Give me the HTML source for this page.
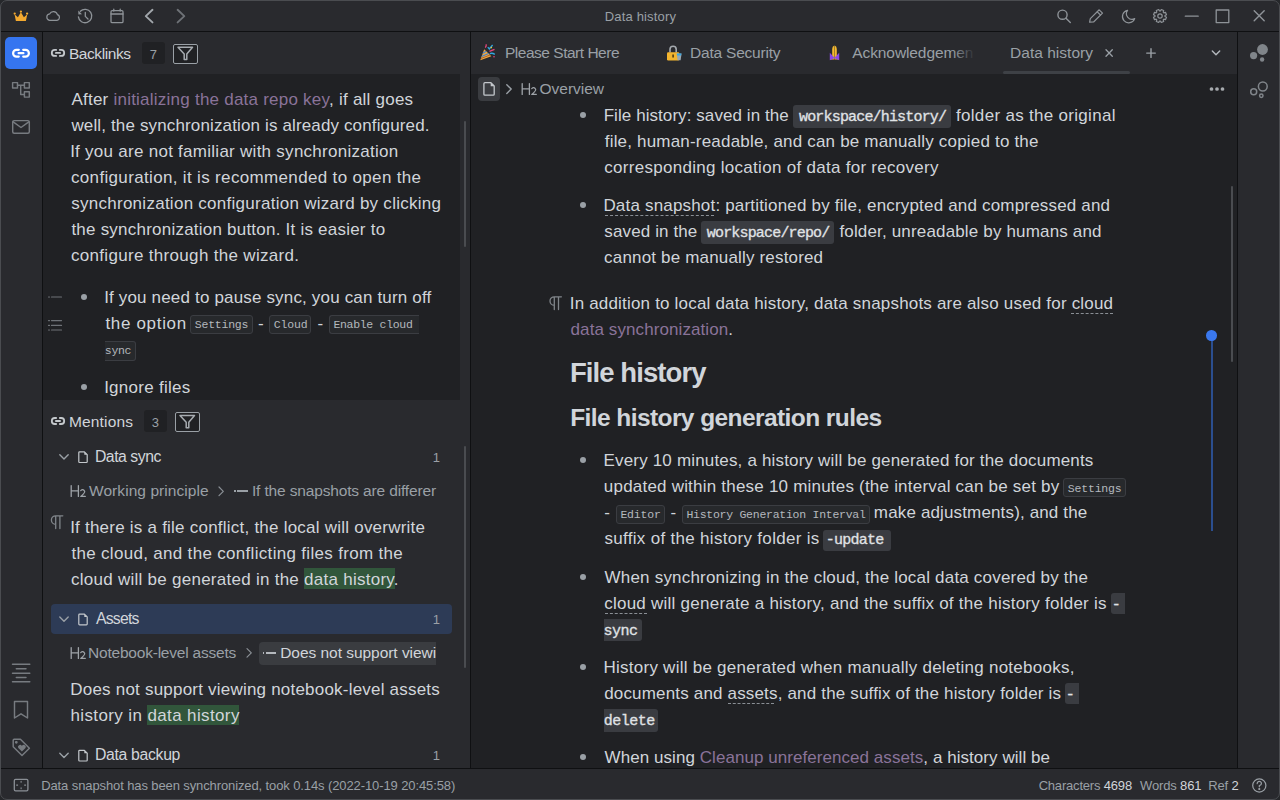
<!DOCTYPE html>
<html><head><meta charset="utf-8"><style>
html,body{margin:0;padding:0;}
body{width:1280px;height:800px;overflow:hidden;position:relative;background:#292a2e;font-family:"Liberation Sans",sans-serif;color:#d1d5da;}
.l{position:absolute;white-space:nowrap;}
.b{position:absolute;}
svg{position:absolute;overflow:visible;}

</style></head><body>
<div class="b" style="left:0.00px;top:31.00px;width:1280.00px;height:1.00px;background:#0f1012"></div>
<div class="b" style="left:42.00px;top:31.00px;width:1.00px;height:737.00px;background:#0f1012"></div>
<div class="b" style="left:43.00px;top:74.00px;width:417.00px;height:326.00px;background:#202124"></div>
<div class="b" style="left:464.00px;top:121.00px;width:2.00px;height:126.00px;background:#4a4c50;border-radius:1px"></div>
<div class="b" style="left:464.00px;top:446.00px;width:2.00px;height:222.00px;background:#4a4c50;border-radius:1px"></div>
<div class="b" style="left:470.00px;top:31.00px;width:1.00px;height:737.00px;background:#0f1012"></div>
<div class="b" style="left:471.00px;top:74.00px;width:766.00px;height:694.00px;background:#202124"></div>
<div class="b" style="left:1237.00px;top:31.00px;width:1.00px;height:737.00px;background:#0f1012"></div>
<div class="b" style="left:0.00px;top:768.00px;width:1280.00px;height:1.00px;background:#0f1012"></div>
<div class="b" style="left:1231.00px;top:186.00px;width:2.00px;height:176.00px;background:#4a4c50;border-radius:1px"></div>
<div class="b" style="left:1210.50px;top:336.00px;width:2.00px;height:195.00px;background:#2b4e8f"></div>
<div class="b" style="left:1206.30px;top:330.30px;width:10.60px;height:10.60px;background:#3a78ee;border-radius:50%"></div>
<div class="l" id="t1" style="letter-spacing:0.157px;left:604.83px;top:9.00px;font-size:13px;line-height:15px;color:#9aa0a6;">Data history</div>
<div class="b" style="left:5.00px;top:37.00px;width:32.00px;height:32.00px;background:#3575f0;border-radius:5px"></div>
<div class="l" id="t2" style="letter-spacing:-0.421px;left:68.93px;top:45.00px;font-size:15.5px;line-height:17px;color:#d1d5da;">Backlinks</div>
<div class="b" style="left:142.00px;top:42.00px;width:23.00px;height:21.60px;background:#202124;border-radius:3px"></div>
<div class="l" id="t3" style="left:149.63px;top:47.00px;font-size:13px;line-height:15px;color:#9aa0a6;">7</div>
<div class="b" style="left:173.00px;top:43.70px;width:25.00px;height:20.30px;border:1px solid #9aa0a6;box-sizing:border-box;border-radius:2px;background:#202124"></div>
<div class="l" id="t4" style="letter-spacing:0.235px;left:71.40px;top:90.00px;font-size:17px;line-height:19px;">After <span style="color:#8a7399">initializing the data repo key</span>, if all goes</div>
<div class="l" id="t5" style="letter-spacing:0.140px;left:71.40px;top:116.00px;font-size:17px;line-height:19px;">well, the synchronization is already configured.</div>
<div class="l" id="t6" style="letter-spacing:0.269px;left:70.13px;top:142.00px;font-size:17px;line-height:19px;">If you are not familiar with synchronization</div>
<div class="l" id="t7" style="letter-spacing:0.340px;left:70.98px;top:168.00px;font-size:17px;line-height:19px;">configuration, it is recommended to open the</div>
<div class="l" id="t8" style="letter-spacing:0.268px;left:71.23px;top:194.00px;font-size:17px;line-height:19px;">synchronization configuration wizard by clicking</div>
<div class="l" id="t9" style="letter-spacing:0.224px;left:71.40px;top:220.00px;font-size:17px;line-height:19px;">the synchronization button. It is easier to</div>
<div class="l" id="t10" style="letter-spacing:0.316px;left:70.98px;top:246.00px;font-size:17px;line-height:19px;">configure through the wizard.</div>
<div class="b" style="left:80.90px;top:294.00px;width:6.00px;height:6.00px;background:#9aa0a6;border-radius:50%"></div>
<div class="l" id="t11" style="letter-spacing:0.168px;left:104.13px;top:288.00px;font-size:17px;line-height:19px;">If you need to pause sync, you can turn off</div>
<div class="l" id="t12" style="letter-spacing:0.679px;left:105.40px;top:314.00px;font-size:17px;line-height:19px;">the option</div>
<div class="b" style="left:190.40px;top:315.40px;width:62.40px;height:19.10px;background:#27292c;border:1px solid #3b3d42;box-sizing:border-box;border-radius:3px"></div>
<div class="l" id="t13" style="letter-spacing:-0.246px;left:194.86px;top:318.00px;font-size:11.5px;line-height:13px;font-family:'Liberation Mono',monospace;color:#b4b8bd;">Settings</div>
<div class="l" id="t14" style="left:258.04px;top:314.00px;font-size:17px;line-height:19px;">-</div>
<div class="b" style="left:269.30px;top:315.40px;width:41.70px;height:19.10px;background:#27292c;border:1px solid #3b3d42;box-sizing:border-box;border-radius:3px"></div>
<div class="l" id="t15" style="letter-spacing:-0.129px;left:273.67px;top:318.00px;font-size:11.5px;line-height:13px;font-family:'Liberation Mono',monospace;color:#b4b8bd;">Cloud</div>
<div class="l" id="t16" style="left:317.54px;top:314.00px;font-size:17px;line-height:19px;">-</div>
<div class="b" style="left:329.00px;top:315.40px;width:89.80px;height:19.10px;background:#27292c;border:1px solid #3b3d42;border-right:none;box-sizing:border-box;border-radius:3px 0 0 3px"></div>
<div class="l" id="t17" style="letter-spacing:-0.303px;left:333.39px;top:318.00px;font-size:11.5px;line-height:13px;font-family:'Liberation Mono',monospace;color:#b4b8bd;">Enable cloud</div>
<div class="b" style="left:105.00px;top:341.00px;width:30.70px;height:19.70px;background:#27292c;border:1px solid #3b3d42;border-left:none;box-sizing:border-box;border-radius:0 3px 3px 0"></div>
<div class="l" id="t18" style="letter-spacing:-0.370px;left:104.86px;top:344.00px;font-size:11.5px;line-height:13px;font-family:'Liberation Mono',monospace;color:#b4b8bd;">sync</div>
<div class="b" style="left:80.90px;top:384.00px;width:6.00px;height:6.00px;background:#9aa0a6;border-radius:50%"></div>
<div class="l" id="t19" style="letter-spacing:0.266px;left:104.13px;top:378.00px;font-size:17px;line-height:19px;">Ignore files</div>
<div class="l" id="t20" style="letter-spacing:0.171px;left:68.93px;top:413.00px;font-size:15.5px;line-height:17px;color:#d1d5da;">Mentions</div>
<div class="b" style="left:144.00px;top:410.00px;width:23.00px;height:21.50px;background:#202124;border-radius:3px"></div>
<div class="l" id="t21" style="left:151.80px;top:415.00px;font-size:13px;line-height:15px;color:#9aa0a6;">3</div>
<div class="b" style="left:175.00px;top:412.00px;width:25.00px;height:20.30px;border:1px solid #9aa0a6;box-sizing:border-box;border-radius:2px;background:#202124"></div>
<div class="l" id="t22" style="letter-spacing:-0.469px;left:94.90px;top:448.00px;font-size:15.8px;line-height:17px;color:#d1d5da;">Data sync</div>
<div class="l" id="t23" style="left:432.81px;top:450.00px;font-size:13px;line-height:15px;color:#9aa0a6;">1</div>
<div class="l" id="t24" style="letter-spacing:0.068px;left:89.00px;top:482.00px;font-size:15.5px;line-height:17px;color:#9aa0a6;">Working principle</div>
<div class="l" id="t25" style="letter-spacing:-0.154px;left:251.97px;top:482.00px;font-size:15.5px;line-height:17px;color:#9aa0a6;">If the snapshots are differer</div>
<div class="b" style="left:234.10px;top:490.00px;width:1.70px;height:2.00px;background:#9aa0a6"></div>
<div class="b" style="left:237.10px;top:490.00px;width:10.70px;height:2.00px;background:#9aa0a6"></div>
<div class="l" id="t26" style="letter-spacing:0.229px;left:70.13px;top:518.00px;font-size:17px;line-height:19px;">If there is a file conflict, the local will overwrite</div>
<div class="l" id="t27" style="letter-spacing:0.313px;left:71.40px;top:544.00px;font-size:17px;line-height:19px;">the cloud, and the conflicting files from the</div>
<div class="b" style="left:303.70px;top:568.00px;width:91.10px;height:21.00px;background:#31563b"></div>
<div class="l" id="t28" style="letter-spacing:0.263px;left:70.98px;top:570.00px;font-size:17px;line-height:19px;">cloud will be generated in the data history.</div>
<div class="b" style="left:51.00px;top:604.00px;width:400.80px;height:29.60px;background:#2d3b56;border-radius:4px"></div>
<div class="l" id="t29" style="letter-spacing:-0.781px;left:95.90px;top:610.00px;font-size:15.8px;line-height:17px;color:#d1d5da;">Assets</div>
<div class="l" id="t30" style="left:432.81px;top:612.00px;font-size:13px;line-height:15px;color:#9aa0a6;">1</div>
<div class="l" id="t31" style="letter-spacing:-0.210px;left:88.03px;top:644.00px;font-size:15.5px;line-height:17px;color:#9aa0a6;">Notebook-level assets</div>
<div class="b" style="left:258.70px;top:642.00px;width:177.00px;height:23.00px;background:#3a3c40;border-radius:4px 0 0 4px"></div>
<div class="l" id="t32" style="letter-spacing:-0.039px;left:280.23px;top:644.00px;font-size:15.5px;line-height:17px;color:#d1d5da;">Does not support viewi</div>
<div class="b" style="left:262.60px;top:652.00px;width:1.70px;height:2.00px;background:#b4b8bd"></div>
<div class="b" style="left:265.60px;top:652.00px;width:10.70px;height:2.00px;background:#b4b8bd"></div>
<div class="l" id="t33" style="letter-spacing:0.210px;left:70.31px;top:680.00px;font-size:17px;line-height:19px;">Does not support viewing notebook-level assets</div>
<div class="b" style="left:147.00px;top:704.50px;width:91.80px;height:20.80px;background:#31563b"></div>
<div class="l" id="t34" style="letter-spacing:0.375px;left:70.52px;top:706.00px;font-size:17px;line-height:19px;">history in data history</div>
<div class="l" id="t35" style="letter-spacing:-0.320px;left:94.90px;top:746.00px;font-size:15.8px;line-height:17px;color:#d1d5da;">Data backup</div>
<div class="l" id="t36" style="left:432.81px;top:748.00px;font-size:13px;line-height:15px;color:#9aa0a6;">1</div>
<div class="l" id="t37" style="letter-spacing:-0.490px;left:505.03px;top:44.00px;font-size:15.5px;line-height:17px;color:#9aa0a6;">Please Start Here</div>
<div class="l" id="t38" style="letter-spacing:-0.212px;left:690.03px;top:44.00px;font-size:15.5px;line-height:17px;color:#9aa0a6;">Data Security</div>
<div class="l" id="t39" style="letter-spacing:-0.097px;left:852.30px;top:44.00px;font-size:15.5px;line-height:17px;color:#9aa0a6;">Acknowledgemen</div>
<div class="l" id="t40" style="letter-spacing:0.027px;left:1010.03px;top:44.00px;font-size:15.5px;line-height:17px;color:#9aa0a6;">Data history</div>
<div class="b" style="left:1003.30px;top:71.00px;width:126.30px;height:3.00px;background:#3e4146;border-radius:2px"></div>
<div class="b" style="left:478.00px;top:77.00px;width:22.00px;height:24.00px;background:#3a3c40;border-radius:4px"></div>
<div class="l" id="t41" style="letter-spacing:-0.016px;left:539.57px;top:80.00px;font-size:15.5px;line-height:17px;color:#9aa0a6;">Overview</div>
<div class="b" style="left:580.00px;top:112.00px;width:6.00px;height:6.00px;background:#9aa0a6;border-radius:50%"></div>
<div class="l" id="t42" style="letter-spacing:0.071px;left:603.66px;top:106.00px;font-size:17px;line-height:19px;">File history: saved in the</div>
<div class="b" style="left:793.00px;top:105.30px;width:157.75px;height:22.50px;background:#3a3c41;border-radius:3px"></div>
<div class="l" id="t43" style="letter-spacing:-0.825px;left:799.00px;top:109.00px;font-size:15px;line-height:17px;font-family:'Liberation Mono',monospace;-webkit-text-stroke:0.3px currentColor;color:#e0e3e6;">workspace/history/</div>
<div class="l" id="t44" style="letter-spacing:0.305px;left:956.00px;top:106.00px;font-size:17px;line-height:19px;">folder as the original</div>
<div class="l" id="t45" style="letter-spacing:0.191px;left:604.75px;top:132.00px;font-size:17px;line-height:19px;">file, human-readable, and can be manually copied to the</div>
<div class="l" id="t46" style="letter-spacing:0.285px;left:604.33px;top:158.00px;font-size:17px;line-height:19px;">corresponding location of data for recovery</div>
<div class="b" style="left:580.00px;top:202.00px;width:6.00px;height:6.00px;background:#9aa0a6;border-radius:50%"></div>
<div class="l" id="t47" style="letter-spacing:0.182px;left:603.41px;top:196.00px;font-size:17px;line-height:19px;">Data snapshot: partitioned by file, encrypted and compressed and</div>
<div class="b" style="left:604.50px;top:215.00px;width:109.00px;height:1.00px;border-top:1px dashed #8a8f95"></div>
<div class="l" id="t48" style="letter-spacing:0.119px;left:604.33px;top:222.00px;font-size:17px;line-height:19px;">saved in the</div>
<div class="b" style="left:701.20px;top:221.30px;width:132.60px;height:22.50px;background:#3a3c41;border-radius:3px"></div>
<div class="l" id="t49" style="letter-spacing:-0.824px;left:706.80px;top:225.00px;font-size:15px;line-height:17px;font-family:'Liberation Mono',monospace;-webkit-text-stroke:0.3px currentColor;color:#e0e3e6;">workspace/repo/</div>
<div class="l" id="t50" style="letter-spacing:0.162px;left:839.40px;top:222.00px;font-size:17px;line-height:19px;">folder, unreadable by humans and</div>
<div class="l" id="t51" style="letter-spacing:0.172px;left:604.08px;top:248.00px;font-size:17px;line-height:19px;">cannot be manually restored</div>
<div class="l" id="t52" style="letter-spacing:0.187px;left:569.73px;top:294.00px;font-size:17px;line-height:19px;">In addition to local data history, data snapshots are also used for cloud</div>
<div class="b" style="left:1071.00px;top:313.00px;width:41.80px;height:1.00px;border-top:1px dashed #8a8f95"></div>
<div class="l" id="t53" style="letter-spacing:0.091px;left:570.59px;top:320.00px;font-size:17px;line-height:19px;"><span style="color:#8a7399">data synchronization</span>.</div>
<div class="l" id="t54" style="letter-spacing:-0.928px;left:569.96px;top:357.00px;font-size:27.5px;line-height:31px;font-weight:700;color:#d1d5da;">File history</div>
<div class="l" id="t55" style="letter-spacing:-0.579px;left:570.16px;top:404.00px;font-size:24.5px;line-height:27px;font-weight:700;color:#d1d5da;">File history generation rules</div>
<div class="b" style="left:580.00px;top:457.00px;width:6.00px;height:6.00px;background:#9aa0a6;border-radius:50%"></div>
<div class="l" id="t56" style="letter-spacing:0.174px;left:603.51px;top:451.00px;font-size:17px;line-height:19px;">Every 10 minutes, a history will be generated for the documents</div>
<div class="l" id="t57" style="letter-spacing:0.210px;left:603.80px;top:477.00px;font-size:17px;line-height:19px;">updated within these 10 minutes (the interval can be set by</div>
<div class="b" style="left:1063.40px;top:478.40px;width:62.30px;height:19.00px;background:#27292c;border:1px solid #3b3d42;box-sizing:border-box;border-radius:3px"></div>
<div class="l" id="t58" style="letter-spacing:-0.203px;left:1067.86px;top:482.00px;font-size:11.5px;line-height:13px;font-family:'Liberation Mono',monospace;color:#b4b8bd;">Settings</div>
<div class="l" id="t59" style="left:604.14px;top:503.00px;font-size:17px;line-height:19px;">-</div>
<div class="b" style="left:616.30px;top:504.50px;width:48.70px;height:19.20px;background:#27292c;border:1px solid #3b3d42;box-sizing:border-box;border-radius:3px"></div>
<div class="l" id="t60" style="letter-spacing:-0.184px;left:620.39px;top:508.00px;font-size:11.5px;line-height:13px;font-family:'Liberation Mono',monospace;color:#b4b8bd;">Editor</div>
<div class="l" id="t61" style="left:670.54px;top:503.00px;font-size:17px;line-height:19px;">-</div>
<div class="b" style="left:682.00px;top:504.50px;width:187.70px;height:19.20px;background:#27292c;border:1px solid #3b3d42;box-sizing:border-box;border-radius:3px"></div>
<div class="l" id="t62" style="letter-spacing:-0.263px;left:686.39px;top:508.00px;font-size:11.5px;line-height:13px;font-family:'Liberation Mono',monospace;color:#b4b8bd;">History Generation Interval</div>
<div class="l" id="t63" style="letter-spacing:0.145px;left:873.87px;top:503.00px;font-size:17px;line-height:19px;">make adjustments), and the</div>
<div class="l" id="t64" style="letter-spacing:0.308px;left:604.43px;top:529.00px;font-size:17px;line-height:19px;">suffix of the history folder is</div>
<div class="b" style="left:823.00px;top:529.50px;width:67.70px;height:21.30px;background:#3a3c41;border-radius:3px"></div>
<div class="l" id="t65" style="letter-spacing:-0.753px;left:825.85px;top:532.00px;font-size:15px;line-height:17px;font-family:'Liberation Mono',monospace;-webkit-text-stroke:0.3px currentColor;color:#e0e3e6;">-update</div>
<div class="b" style="left:580.00px;top:574.00px;width:6.00px;height:6.00px;background:#9aa0a6;border-radius:50%"></div>
<div class="l" id="t66" style="letter-spacing:0.192px;left:604.60px;top:568.00px;font-size:17px;line-height:19px;">When synchronizing in the cloud, the local data covered by the</div>
<div class="l" id="t67" style="letter-spacing:0.250px;left:604.18px;top:594.00px;font-size:17px;line-height:19px;">cloud will generate a history, and the suffix of the history folder is</div>
<div class="b" style="left:604.60px;top:613.00px;width:42.40px;height:1.00px;border-top:1px dashed #8a8f95"></div>
<div class="b" style="left:1111.00px;top:593.40px;width:13.70px;height:21.00px;background:#3a3c41;border-radius:3px 0 0 3px"></div>
<div class="l" id="t68" style="left:1111.85px;top:597.00px;font-size:15px;line-height:17px;font-family:'Liberation Mono',monospace;-webkit-text-stroke:0.3px currentColor;color:#e0e3e6;">-</div>
<div class="b" style="left:603.80px;top:619.30px;width:38.00px;height:21.70px;background:#3a3c41;border-radius:0 3px 3px 0"></div>
<div class="l" id="t69" style="letter-spacing:-0.505px;left:603.58px;top:623.00px;font-size:15px;line-height:17px;font-family:'Liberation Mono',monospace;-webkit-text-stroke:0.3px currentColor;color:#e0e3e6;">sync</div>
<div class="b" style="left:580.00px;top:664.00px;width:6.00px;height:6.00px;background:#9aa0a6;border-radius:50%"></div>
<div class="l" id="t70" style="letter-spacing:0.249px;left:603.51px;top:658.00px;font-size:17px;line-height:19px;">History will be generated when manually deleting notebooks,</div>
<div class="l" id="t71" style="letter-spacing:0.170px;left:604.19px;top:684.00px;font-size:17px;line-height:19px;">documents and assets, and the suffix of the history folder is</div>
<div class="b" style="left:728.00px;top:703.40px;width:45.80px;height:1.00px;border-top:1px dashed #8a8f95"></div>
<div class="b" style="left:1065.00px;top:683.00px;width:13.60px;height:21.00px;background:#3a3c41;border-radius:3px 0 0 3px"></div>
<div class="l" id="t72" style="left:1065.85px;top:687.00px;font-size:15px;line-height:17px;font-family:'Liberation Mono',monospace;-webkit-text-stroke:0.3px currentColor;color:#e0e3e6;">-</div>
<div class="b" style="left:603.75px;top:708.75px;width:54.05px;height:23.45px;background:#3a3c41;border-radius:0 3px 3px 0"></div>
<div class="l" id="t73" style="letter-spacing:-0.503px;left:603.79px;top:713.00px;font-size:15px;line-height:17px;font-family:'Liberation Mono',monospace;-webkit-text-stroke:0.3px currentColor;color:#e0e3e6;">delete</div>
<div class="b" style="left:580.00px;top:754.00px;width:6.00px;height:6.00px;background:#9aa0a6;border-radius:50%"></div>
<div class="l" id="t74" style="letter-spacing:0.056px;left:604.60px;top:748.00px;font-size:17px;line-height:19px;">When using <span style="color:#8a7399">Cleanup unreferenced assets</span>, a history will be</div>
<div class="l" id="t75" style="letter-spacing:-0.108px;left:41.23px;top:778.00px;font-size:13px;line-height:15px;color:#9aa0a6;">Data snapshot has been synchronized, took 0.14s (2022-10-19 20:45:58)</div>
<div class="l" id="t76" style="letter-spacing:-0.188px;left:1038.64px;top:778.00px;font-size:13px;line-height:15px;color:#9aa0a6;">Characters <span style="color:#d1d5da">4698</span></div>
<div class="l" id="t77" style="letter-spacing:-0.143px;left:1140.00px;top:778.00px;font-size:13px;line-height:15px;color:#9aa0a6;">Words <span style="color:#d1d5da">861</span></div>
<div class="l" id="t78" style="letter-spacing:-0.145px;left:1208.23px;top:778.00px;font-size:13px;line-height:15px;color:#9aa0a6;">Ref <span style="color:#d1d5da">2</span></div>
<svg width="1280" height="800" style="left:0;top:0" fill="#f3a92f"><path d="M15.9 21 L14.5 14.3 L17.9 17.2 L20.9 12.3 L23.9 17.2 L27.3 14.3 L25.9 21 Z"/><circle cx="14.7" cy="13.6" r="1.15"/><circle cx="20.9" cy="11.6" r="1.15"/><circle cx="27.1" cy="13.6" r="1.15"/></svg>
<svg width="1280" height="800" style="left:0;top:0" fill="none" stroke="#8e9398" stroke-width="1.2" stroke-linecap="round" stroke-linejoin="round"><path d="M49.5 20.4 H57 A3 3 0 0 0 57.4 14.6 A4.2 4.2 0 0 0 49.6 13.9 A3.3 3.3 0 0 0 49.5 20.4 Z"/></svg>
<svg width="1280" height="800" style="left:0;top:0" fill="none" stroke="#8e9398" stroke-width="1.3" stroke-linecap="round" stroke-linejoin="round"><path d="M80.3 11.3 A6.7 6.7 0 1 1 78.4 16.8"/><path d="M85.3 12.4 V16.4 L88 19"/><path d="M78.2 10.6 L78.4 14.4 L82 14.2 Z" fill="#8e9398" stroke="none"/></svg>
<svg width="1280" height="800" style="left:0;top:0" fill="none" stroke="#8e9398" stroke-width="1.3" stroke-linecap="round" stroke-linejoin="round"><rect x="111" y="10.6" width="12" height="12" rx="1.2"/><path d="M111 14 H123"/><path d="M113.8 9.2 V11 M120.2 9.2 V11"/></svg>
<svg width="1280" height="800" style="left:0;top:0" fill="none" stroke="#a2a7ac" stroke-width="1.9" stroke-linecap="round" stroke-linejoin="round"><path d="M152.5 9.8 L145.8 16.1 L152.5 22.4"/></svg>
<svg width="1280" height="800" style="left:0;top:0" fill="none" stroke="#6e7277" stroke-width="1.9" stroke-linecap="round" stroke-linejoin="round"><path d="M177.6 9.8 L184.3 16.1 L177.6 22.4"/></svg>
<svg width="1280" height="800" style="left:0;top:0" fill="none" stroke="#8e9398" stroke-width="1.4" stroke-linecap="round" stroke-linejoin="round"><circle cx="1062.5" cy="14.7" r="4.6"/><path d="M1066 18.3 L1070.3 22.4"/></svg>
<svg width="1280" height="800" style="left:0;top:0" fill="none" stroke="#8e9398" stroke-width="1.2" stroke-linecap="round" stroke-linejoin="round"><path d="M1089.6 22.2 L1090.3 18.6 L1099.2 9.8 L1102.5 13.1 L1093.6 22 Z"/><path d="M1097.3 11.8 L1100.5 15"/></svg>
<svg width="1280" height="800" style="left:0;top:0" fill="none" stroke="#8e9398" stroke-width="1.2" stroke-linecap="round" stroke-linejoin="round"><path d="M1127.6 10.3 A6.3 6.3 0 1 0 1134.7 18.6 A5.6 5.6 0 0 1 1127.6 10.3 Z"/></svg>
<svg width="1280" height="800" style="left:0;top:0" fill="none" stroke="#8e9398" stroke-width="1.2" stroke-linecap="round" stroke-linejoin="round"><path d="M1166.48 17.26 L1165.47 19.69 L1163.85 19.19 L1163.19 19.85 L1163.69 21.47 L1161.26 22.48 L1160.46 20.98 L1159.54 20.98 L1158.74 22.48 L1156.31 21.47 L1156.81 19.85 L1156.15 19.19 L1154.53 19.69 L1153.52 17.26 L1155.02 16.46 L1155.02 15.54 L1153.52 14.74 L1154.53 12.31 L1156.15 12.81 L1156.81 12.15 L1156.31 10.53 L1158.74 9.52 L1159.54 11.02 L1160.46 11.02 L1161.26 9.52 L1163.69 10.53 L1163.19 12.15 L1163.85 12.81 L1165.47 12.31 L1166.48 14.74 L1164.98 15.54 L1164.98 16.46 Z"/><circle cx="1160" cy="16" r="2.2"/></svg>
<svg width="1280" height="800" style="left:0;top:0" fill="none" stroke="#8e9398" stroke-width="1.3" stroke-linecap="round" stroke-linejoin="round"><path d="M1185.3 16.2 H1198.2"/></svg>
<svg width="1280" height="800" style="left:0;top:0" fill="none" stroke="#8e9398" stroke-width="1.3" stroke-linecap="round" stroke-linejoin="round"><rect x="1216.2" y="10" width="12.6" height="12.6"/></svg>
<svg width="1280" height="800" style="left:0;top:0" fill="none" stroke="#8e9398" stroke-width="1.4" stroke-linecap="round" stroke-linejoin="round"><path d="M1254.2 10.8 L1264.2 20.8 M1264.2 10.8 L1254.2 20.8"/></svg>
<svg width="1280" height="800" style="left:0;top:0" fill="none" stroke="#ffffff" stroke-width="2.2" stroke-linecap="round" stroke-linejoin="round"><path d="M18.80 49.80 H16.50 A3.40 3.40 0 0 0 16.50 56.60 H18.80"/><path d="M23.20 49.80 H25.50 A3.40 3.40 0 0 1 25.50 56.60 H23.20"/><path d="M18.60 53.20 H23.40"/></svg>
<svg width="1280" height="800" style="left:0;top:0" fill="none" stroke="#777b80" stroke-width="1.45" stroke-linecap="round" stroke-linejoin="round"><rect x="12.6" y="82.6" width="4.9" height="5.3"/><rect x="24.4" y="82.6" width="4.9" height="5.3"/><rect x="24.4" y="91.8" width="4.9" height="5.3"/><path d="M17.5 85.3 H24.4 M20.7 85.3 V94.5 H24.4"/></svg>
<svg width="1280" height="800" style="left:0;top:0" fill="none" stroke="#777b80" stroke-width="1.45" stroke-linecap="round" stroke-linejoin="round"><rect x="12.7" y="120.6" width="16.6" height="12.6" rx="1.5"/><path d="M13.2 121.8 L21 127.5 L28.8 121.8"/></svg>
<svg width="1280" height="800" style="left:0;top:0" fill="none" stroke="#777b80" stroke-width="1.45" stroke-linecap="round" stroke-linejoin="round"><path d="M12.5 664.3 H29.8 M16.3 668.8 H26 M12.5 673.2 H29.8 M16.3 677.5 H26 M12.5 681.8 H29.8"/></svg>
<svg width="1280" height="800" style="left:0;top:0" fill="none" stroke="#777b80" stroke-width="1.45" stroke-linecap="round" stroke-linejoin="round"><path d="M14.5 701.5 H27.5 V718 L21 713.8 L14.5 718 Z"/></svg>
<svg width="1280" height="800" style="left:0;top:0" fill="none" stroke="#777b80" stroke-width="1.45" stroke-linecap="round" stroke-linejoin="round"><path d="M13.2 740.2 Q13.2 739.2 14.2 739.2 H20.4 L29.4 748.2 L22 755.6 L13.2 746.8 Z"/><circle cx="16.3" cy="742.3" r="0.7" fill="#777b80"/><path d="M21.9 751.6 L18.3 748.1 A1.85 1.85 0 0 1 21.9 745.9 A1.85 1.85 0 0 1 25.5 748.1 Z" fill="#777b80" stroke="none"/></svg>
<svg width="1280" height="800" style="left:0;top:0" fill="none" stroke="#c4c8cc" stroke-width="1.8" stroke-linecap="round" stroke-linejoin="round"><path d="M56.15 49.92 H54.77 A2.98 2.98 0 0 0 54.77 55.88 H56.15"/><path d="M59.85 49.92 H61.23 A2.98 2.98 0 0 1 61.23 55.88 H59.85"/><path d="M55.90 52.90 H60.10"/></svg>
<svg width="1280" height="800" style="left:0;top:0" fill="none" stroke="#a6abb0" stroke-width="1.5" stroke-linecap="round" stroke-linejoin="round"><path d="M178.0 47.3 H192.5 L186.8 53.9 V59.5 H184.2 V53.9 Z"/></svg>
<svg width="1280" height="800" style="left:0;top:0" fill="none" stroke="#c4c8cc" stroke-width="1.8" stroke-linecap="round" stroke-linejoin="round"><path d="M56.15 418.02 H54.77 A2.98 2.98 0 0 0 54.77 423.98 H56.15"/><path d="M59.85 418.02 H61.23 A2.98 2.98 0 0 1 61.23 423.98 H59.85"/><path d="M55.90 421.00 H60.10"/></svg>
<svg width="1280" height="800" style="left:0;top:0" fill="none" stroke="#a6abb0" stroke-width="1.5" stroke-linecap="round" stroke-linejoin="round"><path d="M180.0 415.6 H194.5 L188.8 422.2 V427.8 H186.2 V422.2 Z"/></svg>
<svg width="1280" height="800" style="left:0;top:0" fill="none" stroke="#9aa0a6" stroke-width="1.4" stroke-linecap="round" stroke-linejoin="round"><path d="M59.8 454.7 L64 458.9 L68.2 454.7"/></svg>
<svg width="1280" height="800" style="left:0;top:0" fill="none" stroke="#c4c8cc" stroke-width="1.2" stroke-linecap="round" stroke-linejoin="round"><path d="M79.6 451.80 H84.4 L87.2 454.60 V461.70 Q87.2 462.50 86.4 462.50 H79.6 Q78.8 462.50 78.8 461.70 V452.60 Q78.8 451.80 79.6 451.80 Z"/></svg>
<svg width="1280" height="800" style="left:0;top:0" fill="#c4c8cc"><path d="M84.3 451.80 L87.3 454.80 H84.3 Z"/></svg>
<svg width="1280" height="800" style="left:0;top:0" fill="none" stroke="#9aa0a6" stroke-width="1.4" stroke-linecap="round" stroke-linejoin="round"><path d="M59.8 617.0 L64 621.2 L68.2 617.0"/></svg>
<svg width="1280" height="800" style="left:0;top:0" fill="none" stroke="#c4c8cc" stroke-width="1.2" stroke-linecap="round" stroke-linejoin="round"><path d="M79.6 614.10 H84.4 L87.2 616.90 V624.00 Q87.2 624.80 86.4 624.80 H79.6 Q78.8 624.80 78.8 624.00 V614.90 Q78.8 614.10 79.6 614.10 Z"/></svg>
<svg width="1280" height="800" style="left:0;top:0" fill="#c4c8cc"><path d="M84.3 614.10 L87.3 617.10 H84.3 Z"/></svg>
<svg width="1280" height="800" style="left:0;top:0" fill="none" stroke="#9aa0a6" stroke-width="1.4" stroke-linecap="round" stroke-linejoin="round"><path d="M59.8 753.2 L64 757.4 L68.2 753.2"/></svg>
<svg width="1280" height="800" style="left:0;top:0" fill="none" stroke="#c4c8cc" stroke-width="1.2" stroke-linecap="round" stroke-linejoin="round"><path d="M79.6 750.30 H84.4 L87.2 753.10 V760.20 Q87.2 761.00 86.4 761.00 H79.6 Q78.8 761.00 78.8 760.20 V751.10 Q78.8 750.30 79.6 750.30 Z"/></svg>
<svg width="1280" height="800" style="left:0;top:0" fill="#c4c8cc"><path d="M84.3 750.30 L87.3 753.30 H84.3 Z"/></svg>
<svg width="1280" height="800" style="left:0;top:0" fill="none" stroke="#8a8f95" stroke-width="1.2" stroke-linecap="round" stroke-linejoin="round"><path d="M219 487 L223.3 491.3 L219 495.6"/></svg>
<svg width="1280" height="800" style="left:0;top:0" fill="none" stroke="#8a8f95" stroke-width="1.2" stroke-linecap="round" stroke-linejoin="round"><path d="M247 648.6 L251.3 652.9 L247 657.2"/></svg>
<svg width="1280" height="800" style="left:0;top:0" fill="none" stroke="#6e7277" stroke-width="1.2" stroke-linecap="round" stroke-linejoin="round"><path d="M48.5 297 H49.5 M51.5 297 H61.5"/></svg>
<svg width="1280" height="800" style="left:0;top:0" fill="none" stroke="#6e7277" stroke-width="1.2" stroke-linecap="round" stroke-linejoin="round"><path d="M48.5 320.6 H49.5 M51.5 320.6 H61.5 M48.5 325.4 H49.5 M51.5 325.4 H61.5 M48.5 330 H49.5 M51.5 330 H61.5"/></svg>
<svg width="1280" height="800" style="left:0;top:0" fill="none" stroke="#c4c8cc" stroke-width="1.3" stroke-linecap="round" stroke-linejoin="round"><path d="M484.9 82.7 H490.9 L494.2 86 V94.2 Q494.2 95.2 493.2 95.2 H484.9 Q483.9 95.2 483.9 94.2 V83.7 Q483.9 82.7 484.9 82.7 Z"/></svg>
<svg width="1280" height="800" style="left:0;top:0" fill="#c4c8cc"><path d="M490.7 82.7 L494.3 86.3 H490.7 Z"/></svg>
<svg width="1280" height="800" style="left:0;top:0" fill="none" stroke="#9aa0a6" stroke-width="1.4" stroke-linecap="round" stroke-linejoin="round"><path d="M506.8 84.8 L511.2 89.1 L506.8 93.4"/></svg>
<svg width="1280" height="800" style="left:0;top:0" fill="#a6aaae"><circle cx="1211.5" cy="89" r="1.85"/><circle cx="1217" cy="89" r="1.85"/><circle cx="1222.5" cy="89" r="1.85"/></svg>
<svg width="1280" height="800" style="left:0;top:0" fill="none" stroke="#9aa0a6" stroke-width="1.3" stroke-linecap="round" stroke-linejoin="round"><path d="M1106 49.8 L1112.3 56.2 M1112.3 49.8 L1106 56.2"/></svg>
<svg width="1280" height="800" style="left:0;top:0" fill="none" stroke="#9aa0a6" stroke-width="1.4" stroke-linecap="round" stroke-linejoin="round"><path d="M1151 48.8 V57.4 M1146.7 53.1 H1155.3"/></svg>
<svg width="1280" height="800" style="left:0;top:0" fill="none" stroke="#b4b8bd" stroke-width="1.4" stroke-linecap="round" stroke-linejoin="round"><path d="M1212.3 51 L1216 54.8 L1219.7 51"/></svg>
<svg width="1280" height="800" style="left:0;top:0" fill="none"><path d="M480.3 60.2 L484.2 49.2 L491.3 56.3 Z" fill="#f2a93b"/><path d="M481.6 56.6 L488.6 53.6 M482.8 53.2 L486.2 51.3" stroke="#3b7fd6" stroke-width="1.1"/><path d="M481 58.5 L490 55" stroke="#a05a2c" stroke-width="0.9"/><path d="M485.3 47.6 Q486.8 45.8 486 44.3" stroke="#e8467c" stroke-width="1.3" fill="none"/><path d="M487.8 47.2 L489.3 49 L492.6 45" stroke="#2fa8e0" stroke-width="1.3" fill="none"/><path d="M489.5 51.3 L494.5 49.3" stroke="#e8467c" stroke-width="1.4"/><path d="M489.8 53.6 Q492.3 52.6 494.8 54.4" stroke="#2fa8e0" stroke-width="1.3" fill="none"/><circle cx="491.3" cy="47.6" r="0.8" fill="#f2c230"/><circle cx="494" cy="56.8" r="0.8" fill="#e8467c"/></svg>
<svg width="1280" height="800" style="left:0;top:0" fill="none"><path d="M670 52.5 V49.3 A3.1 3.1 0 0 1 676.2 49.3 V52.5" stroke="#a4a9ae" stroke-width="1.6" fill="none"/><rect x="667" y="52.3" width="12.3" height="8.2" rx="1.2" fill="#f3b52f"/><path d="M673.1 54.6 V57.6" stroke="#4a3a18" stroke-width="1.6"/><path d="M676.6 53.6 H681.6 L680.6 60.3 H677.6 Z" fill="#9aa7b0"/><path d="M676.8 53.6 H681.4 L681.1 55.6 H677.1 Z" fill="#3aa6e0"/></svg>
<svg width="1280" height="800" style="left:0;top:0" fill="none"><path d="M834.3 45.5 Q832.2 46 832.2 49 V55.5 L830 59.5 H834.3 Z M834.7 45.5 Q836.8 46 836.8 49 V55.5 L839 59.5 H834.7 Z" fill="#f5b92e"/><path d="M829.8 52.8 L834.5 57.8 L839.2 52.8 V60.2 L834.5 58.2 L829.8 60.2 Z" fill="#8b49e6"/></svg>
<div class="b" style="left:952.00px;top:40.00px;width:23.00px;height:28.00px;background:linear-gradient(90deg, rgba(41,42,46,0), rgba(41,42,46,1))"></div>
<svg width="1280" height="800" style="left:0;top:0" fill="#80858a"><circle cx="1262.5" cy="49.5" r="5.4"/><circle cx="1253.6" cy="55.6" r="3.6"/><circle cx="1262.1" cy="59.5" r="2.2"/></svg>
<svg width="1280" height="800" style="left:0;top:0" fill="none" stroke="#80858a" stroke-width="1.5" stroke-linecap="round" stroke-linejoin="round"><circle cx="1262.8" cy="86.5" r="4.4"/><circle cx="1253.7" cy="91.7" r="3"/><circle cx="1261.3" cy="95.7" r="1.7"/></svg>
<svg width="1280" height="800" style="left:0;top:0" fill="none" stroke="#8a8f95" stroke-width="1.3" stroke-linecap="round" stroke-linejoin="round"><rect x="14.3" y="779.4" width="13.6" height="11.4" rx="1.3"/></svg>
<svg width="1280" height="800" style="left:0;top:0" fill="none" stroke="#8a8f95" stroke-width="1.1" stroke-linecap="round" stroke-linejoin="round"><path d="M21.1 781.3 V782.3 M21.1 787.8 V788.8 M16.6 785.1 H17.6 M24.6 785.1 H25.6"/></svg>
<svg width="1280" height="800" style="left:0;top:0" fill="none" stroke="#9aa0a6" stroke-width="1.2" stroke-linecap="round" stroke-linejoin="round"><circle cx="1259.3" cy="785.5" r="6.6"/><path d="M1257.2 783.6 A2.1 2.1 0 1 1 1259.3 785.5 V786.8"/><circle cx="1259.3" cy="789" r="0.5" fill="#9aa0a6"/></svg>
<svg width="1280" height="800" style="left:0;top:0" fill="none" stroke="#9ea3a8" stroke-width="1.3" stroke-linecap="round" stroke-linejoin="round"><path d="M71.2 485.6 V496.4 M78.4 485.6 V496.4 M71.2 490.8 H78.4"/></svg>
<svg width="1280" height="800" style="left:0;top:0" fill="none" stroke="#9ea3a8" stroke-width="1.2" stroke-linecap="round" stroke-linejoin="round"><path d="M80.7 490.6 Q82.9 488.4 84.7 491.2 Q85.0 493.2 80.7 496.4 H85.3"/></svg>
<svg width="1280" height="800" style="left:0;top:0" fill="none" stroke="#9ea3a8" stroke-width="1.3" stroke-linecap="round" stroke-linejoin="round"><path d="M71.2 647.6 V658.4 M78.4 647.6 V658.4 M71.2 652.8 H78.4"/></svg>
<svg width="1280" height="800" style="left:0;top:0" fill="none" stroke="#9ea3a8" stroke-width="1.2" stroke-linecap="round" stroke-linejoin="round"><path d="M80.7 652.6 Q82.9 650.4 84.7 653.2 Q85.0 655.2 80.7 658.4 H85.3"/></svg>
<svg width="1280" height="800" style="left:0;top:0" fill="none" stroke="#9ea3a8" stroke-width="1.3" stroke-linecap="round" stroke-linejoin="round"><path d="M522.2 83.6 V94.4 M529.4 83.6 V94.4 M522.2 88.8 H529.4"/></svg>
<svg width="1280" height="800" style="left:0;top:0" fill="none" stroke="#9ea3a8" stroke-width="1.2" stroke-linecap="round" stroke-linejoin="round"><path d="M531.7 88.6 Q533.9 86.4 535.7 89.2 Q536.0 91.2 531.7 94.4 H536.3"/></svg>
<svg width="1280" height="800" style="left:0;top:0" fill="none" stroke="#80858a" stroke-width="1.3" stroke-linecap="round" stroke-linejoin="round"><path d="M561.40 296.80 H554.30 A4.3 4.3 0 0 0 554.30 305.40 M554.30 296.80 V309.50 M558.50 296.80 V309.50"/></svg>
<svg width="1280" height="800" style="left:0;top:0" fill="none" stroke="#80858a" stroke-width="1.3" stroke-linecap="round" stroke-linejoin="round"><path d="M62.80 515.80 H55.70 A4.3 4.3 0 0 0 55.70 524.40 M55.70 515.80 V528.50 M59.90 515.80 V528.50"/></svg>
<div class="b" style="left:0;top:0;width:1280px;height:800px;box-sizing:border-box;border:1px solid #4a4c50;border-radius:7px;box-shadow:0 0 0 12px #26282b"></div>
</body></html>
